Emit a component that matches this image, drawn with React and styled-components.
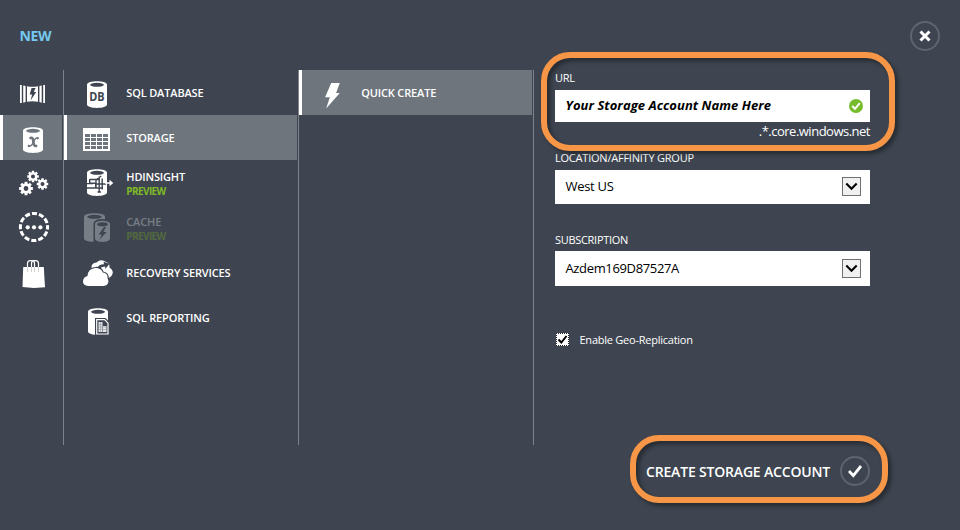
import React from "react";
import styled, { createGlobalStyle } from "styled-components";

const BG = "#3e4550";
const SEL = "#6e757c";

const Global = createGlobalStyle`
  * { box-sizing: border-box; }
  body { margin: 0; background: ${BG}; font-family: "Open Sans", "Noto Sans", sans-serif; }
`;

const Dialog = styled.main`
  position: relative;
  width: 960px;
  height: 530px;
  overflow: hidden;
  background: ${BG};
  color: #fff;
  display: flex;
  flex-direction: column;
`;
const Header = styled.header`
  height: 70px;
  padding: 21px 20px 0 19.5px;
  display: flex;
  justify-content: space-between;
  align-items: flex-start;
`;
const Title = styled.h1`
  margin: 5px 0 0;
  font-size: 14px;
  line-height: 20px;
  font-weight: 700;
  letter-spacing: -0.4px;
  color: #75c8ef;
`;
const RoundButton = styled.button`
  width: 30px;
  height: 30px;
  padding: 0;
  border: 2px solid #5f656f;
  border-radius: 50%;
  background: transparent;
  display: grid;
  place-items: center;
  flex: none;
`;
const Body = styled.div`
  display: flex;
  height: 375px;
`;
const Column = styled.nav`
  width: ${(p) => p.$width}px;
  flex: none;
  border-right: 1px solid #7d828a;
  padding-right: 1px;
`;
const Item = styled.div`
  height: 45px;
  display: flex;
  align-items: center;
  background: ${(p) => (p.$selected ? SEL : "transparent")};
  box-shadow: ${(p) => (p.$selected ? "inset 3px 0 0 #fff" : "none")};
  color: ${(p) => (p.$disabled ? "#787e86" : "#fff")};
`;
const IconBox = styled.svg`
  width: 62px;
  height: 45px;
  flex: none;
  fill: currentColor;
`;
const Labels = styled.div`
  display: flex;
  flex-direction: column;
  white-space: nowrap;
  padding-left: 0.3px;
  padding-top: ${(p) => (p.$two ? 2 : 0)}px;
`;
const Name = styled.span`
  font-size: 11px;
  line-height: 14px;
  font-weight: 600;
  letter-spacing: -0.16px;
`;
const Tag = styled.span`
  font-size: 10px;
  line-height: 14px;
  font-weight: 700;
  letter-spacing: -0.6px;
  color: ${(p) => (p.$disabled ? "#53693f" : "#7fba28")};
`;
const Form = styled.form`
  width: 315px;
  margin-left: 21px;
  display: flex;
  flex-direction: column;
`;
const Caption = styled.label`
  font-size: 11px;
  line-height: 16px;
  height: 16px;
  margin-top: ${(p) => p.$top}px;
  letter-spacing: ${(p) => p.$track}px;
  white-space: nowrap;
`;
const Field = styled.div`
  height: ${(p) => p.$height}px;
  margin-top: ${(p) => p.$gap ?? 4}px;
  padding: 0 ${(p) => p.$end}px ${(p) => p.$lift || 0}px 10.5px;
  background: #fff;
  color: #000;
  display: flex;
  align-items: center;
  justify-content: space-between;
`;
const Value = styled.span`
  font-size: 13px;
  line-height: 18px;
  padding-bottom: ${(p) => p.$raise || 0}px;
  letter-spacing: ${(p) => p.$track}px;
  white-space: nowrap;
  font-weight: ${(p) => (p.$strong ? 700 : 400)};
  font-style: ${(p) => (p.$strong ? "italic" : "normal")};
`;
const Suffix = styled.div`
  font-size: 13px;
  line-height: 18px;
  text-align: right;
  letter-spacing: -0.5px;
`;
const DropButton = styled.span`
  width: 19px;
  height: 19px;
  border: 1px solid #707070;
  background: #f0f0f0;
  display: grid;
  place-items: center;
`;
const CheckRow = styled.label`
  margin: 45px 0 0 1px;
  display: flex;
  align-items: center;
  height: 16px;
  font-size: 11px;
  letter-spacing: -0.24px;
  gap: 10.5px;
`;
const CheckBox = styled.span`
  width: 13px;
  height: 13px;
  background: #fff;
  border: 1px dotted #222;
  display: grid;
  place-items: center;
`;
const Footer = styled.footer`
  display: flex;
  justify-content: flex-end;
  align-items: center;
  gap: 10px;
  padding: 11px 90px 0 0;
`;
const Action = styled.span`
  font-size: 14px;
  line-height: 20px;
  padding-top: 2px;
  font-weight: 600;
  letter-spacing: -0.18px;
  white-space: nowrap;
`;
const Highlight = styled.div`
  position: absolute;
  left: ${(p) => p.$x}px;
  top: ${(p) => p.$y}px;
  width: ${(p) => p.$w}px;
  height: ${(p) => p.$h}px;
  border: 6px solid #f79646;
  border-radius: 29px;
  filter: drop-shadow(3px 3px 2px rgba(0, 0, 0, 0.4));
  pointer-events: none;
`;

const Cyl = ({ x, y, w = 20, h = 27, hole = BG }) => (
  <g>
    <path d={`M${x} ${y + 3.5}C${x} ${y - 1} ${x + w} ${y - 1} ${x + w} ${y + 3.5}V${y + h - 3.5}C${x + w} ${y + h + 1} ${x} ${y + h + 1} ${x} ${y + h - 3.5}Z`} />
    <ellipse cx={x + w / 2} cy={y + 3.8} rx={w * 0.35} ry="2" fill={hole} />
  </g>
);
const gearPath = (cx, cy, r) => {
  const pts = [];
  for (let i = 0; i < 8; i++) {
    const a = (i * Math.PI) / 4;
    [[-0.3, 0.74], [-0.2, 1], [0.2, 1], [0.3, 0.74]].forEach(([d, k]) =>
      pts.push(`${(cx + Math.cos(a + d) * r * k).toFixed(2)} ${(cy + Math.sin(a + d) * r * k).toFixed(2)}`)
    );
  }
  const h = r * 0.34;
  return `M${pts.join("L")}ZM${cx - h} ${cy}a${h} ${h} 0 1 0 ${2 * h} 0a${h} ${h} 0 1 0 ${-2 * h} 0Z`;
};

const icons = {
  compute: (
    <>
      <path d="M20 15h1.8v18H20zM23.2 15.4L25.6 16v16l-2.4.8zM27 16.2q5.5 1.2 11 0v15.6q-5.500-1.200-11 0zM39.4 16l2.3-.6v17.4l-2.3-.8zM43.2 15H45v18h-1.8z" />
      <path d="M31.6 18h4l-1.8 4h2.4l-5.6 8.6 1.5-6h-2.5z" fill={BG} />
    </>
  ),
  data: (
    <>
      <Cyl x={23} y={12} h={26} hole={SEL} />
      <g fill="none" stroke={SEL} strokeLinecap="round">
        <path d="M30.5 23Q33 21.8 33.3 26.5Q33.800 31.500 36.200 31" strokeWidth="2.6" />
        <path d="M37.700 23Q35.500 22.300 33.700 26.500Q31.500 31.800 28.800 31.200" strokeWidth="1.400" />
        <path d="M37.600 23.300h.1M28.800 31h.1" strokeWidth="2.300" />
      </g>
    </>
  ),
  apps: <path fillRule="evenodd" d={gearPath(33, 16.5, 5.9) + gearPath(26, 28.5, 7) + gearPath(42.5, 24, 5.9)} />,
  network: (
    <>
      <circle cx="34" cy="22" r="13.6" fill="none" stroke="currentColor" strokeWidth="3" strokeDasharray="5.12 2" strokeDashoffset="2.5" />
      <circle cx="27.7" cy="22.3" r="2.1" /><circle cx="34" cy="22.3" r="2.1" /><circle cx="40.4" cy="22.3" r="2.1" />
    </>
  ),
  store: (
    <>
      <path d="M23.2 17H43.8L45 37.3 34 38 22.5 37z" />
      <path d="M27.5 17.500V13.500Q27.500 10.600 30.300 10.600H32Q34.500 10.600 34.500 13.500V17.500M31.500 17.500V13.500Q31.500 10.600 34 10.600H35.700Q38.500 10.600 38.500 13.500V17.500" fill="none" stroke="currentColor" strokeWidth="1.2" />
      <path d="M27.5 17v5M31.5 17v5M34.5 17v5M38.5 17v5" stroke="#b0b3b8" strokeWidth=".6" />
    </>
  ),
  db: (
    <>
      <Cyl x={23} y={11} />
      <text x="25.3" y="31" fontSize="11.5" fontWeight="700" fill={BG} textLength="15.4" lengthAdjust="spacingAndGlyphs">DB</text>
    </>
  ),
  table: (
    <>
      <path d="M19 13h27v23H19z" />
      <path fill={SEL} d={[0, 1, 2, 3].map((r) => [0, 1, 2, 3].map((c) => `M${21 + c * 6} ${19 + r * 4}h5v3h-5z`).join("")).join("")} />
    </>
  ),
  insight: (
    <>
      <Cyl x={23} y={9} />
      <path d="M26 19.5h9M25.700 19v4.300h6v4.700M23 28h11M23 23.600h6M31 24h11M35.200 16.500v16M38.200 18.500v11M32 19.500v8.500h7M33.500 32h3.500M32.500 19.500L37.200 16" fill="none" stroke={BG} strokeWidth="1.400" />
      <path d="M41 22.300h4.500V19.800L49.300 23l-3.800 3.200v-2.500H41z" />
    </>
  ),
  cache: (
    <>
      <Cyl x={20} y={8} w={21} h={29} />
      <path d="M29.500 18Q31 14 38 14t9 4V39H29.500z" fill={BG} />
      <Cyl x={31} y={15.5} w={15} h={21.5} />
      <path d="M40 22L34.7 29.4h3.1l-2.4 5.4 7.2-7.8h-3.3l2.7-5z" fill={BG} />
    </>
  ),
  clouds: (
    <>
      <path d="M27.500 18Q27 13 32.500 12.500Q37 8.500 42 12Q46 13 45.500 17.500Q50.500 21 48 25Q46.500 28 43 28L30 23z" />
      <path d="M24.500 36Q18.500 35.500 19 31Q19.300 27 23.500 26Q24 18.500 31.500 18Q37 17.500 38.800 22.500Q44 23 43.500 28Q46.500 34.500 40 36z" stroke={BG} strokeWidth="2.2" paintOrder="stroke" />
      <path d="M33.500 17.500Q35.500 14 40 14.200L39.500 11.800 45.500 13.800 41.500 18.800 41 16.500Q37 16.800 35.500 19z" fill={BG} />
    </>
  ),
  report: (
    <>
      <Cyl x={24} y={13} />
      <path d="M31 23H41.500L45.500 27V41H31z" fill={BG} />
      <path d="M32.700 24.700H40.600L44 28.200V39H32.700z" fill={BG} stroke="#fff" strokeWidth="1.2" />
      <path d="M34.500 27h4v10h-4zM39 31h3.500v6H39z" fill="#e4e6e8" />
      <path d="M34.500 29.500h4M34.500 32h8M34.500 34.500h8M36.500 27v10" stroke="#858b92" strokeWidth=".5" />
    </>
  ),
  quick: <path d="M32.200 13h8.600l-3.700 10h3.700L27.200 38.500l3.600-11.200h-4.700z" />,
};
const Icon = ({ name }) => <IconBox viewBox="0 0 62 45" aria-hidden="true">{icons[name]}</IconBox>;

const rail = ["compute", "data", "apps", "network", "store"];
const services = [
  { icon: "db", name: "SQL DATABASE" },
  { icon: "table", name: "STORAGE", selected: true },
  { icon: "insight", name: "HDINSIGHT", preview: true },
  { icon: "cache", name: "CACHE", preview: true, disabled: true },
  { icon: "clouds", name: "RECOVERY SERVICES" },
  { icon: "report", name: "SQL REPORTING" },
];

const Arrow = () => (
  <DropButton>
    <svg width="13" height="9" viewBox="0 0 13 9"><path d="M1.3 1.5L6.5 6.7L11.7 1.5" fill="none" stroke="#000" strokeWidth="2.1" /></svg>
  </DropButton>
);

export default function App() {
  return (
    <>
      <Global />
      <Dialog>
        <Header>
          <Title>NEW</Title>
          <RoundButton aria-label="Close">
            <svg width="14" height="14" viewBox="0 0 14 14"><path d="M2.5 2.5L11.5 11.5M11.5 2.5L2.5 11.5" stroke="#fff" strokeWidth="3" /></svg>
          </RoundButton>
        </Header>
        <Body>
          <Column $width={64}>
            {rail.map((n) => <Item key={n} $selected={n === "data"}><Icon name={n} /></Item>)}
          </Column>
          <Column $width={235}>
            {services.map((s) => (
              <Item key={s.name} $selected={s.selected} $disabled={s.disabled}>
                <Icon name={s.icon} />
                <Labels $two={s.preview}>
                  <Name>{s.name}</Name>
                  {s.preview && <Tag $disabled={s.disabled}>PREVIEW</Tag>}
                </Labels>
              </Item>
            ))}
          </Column>
          <Column $width={235}>
            <Item $selected><Icon name="quick" /><Labels><Name>QUICK CREATE</Name></Labels></Item>
          </Column>
          <Form>
            <Caption $top={0} $track={-0.3}>URL</Caption>
            <Field $height={32} $end={7} $lift={1}>
              <Value $strong $track={0.05} $raise={1}>Your Storage Account Name Here</Value>
              <svg width="14" height="14" viewBox="0 0 14 14"><circle cx="7" cy="7" r="7" fill="#76bc2d" /><path d="M3.2 7L6 9.8L10.8 4.2" fill="none" stroke="#fff" strokeWidth="2" /></svg>
            </Field>
            <Suffix>.*.core.windows.net</Suffix>
            <Caption $top={10} $track={-0.22}>LOCATION/AFFINITY GROUP</Caption>
            <Field $height={34} $end={9} $lift={1}><Value $track={-0.3} $raise={1}>West US</Value><Arrow /></Field>
            <Caption $top={28} $track={-0.3}>SUBSCRIPTION</Caption>
            <Field $height={35} $end={9} $gap={3} $lift={1}><Value $track={-0.35}>Azdem169D87527A</Value><Arrow /></Field>
            <CheckRow>
              <CheckBox><svg width="11" height="11" viewBox="0 0 11 11"><path d="M1.5 5.5L4.3 8.5L9.5 2" fill="none" stroke="#000" strokeWidth="2" /></svg></CheckBox>
              Enable Geo-Replication
            </CheckRow>
          </Form>
        </Body>
        <Footer>
          <Action>CREATE STORAGE ACCOUNT</Action>
          <RoundButton aria-label="Create storage account">
            <svg width="16" height="16" viewBox="0 0 16 16"><path d="M2 8L6.3 12.6L14 3" fill="none" stroke="#fff" strokeWidth="2.8" /></svg>
          </RoundButton>
        </Footer>
        <Highlight $x={541} $y={52} $w={354} $h={99} />
        <Highlight $x={630} $y={435} $w={258} $h={68} />
      </Dialog>
    </>
  );
}
